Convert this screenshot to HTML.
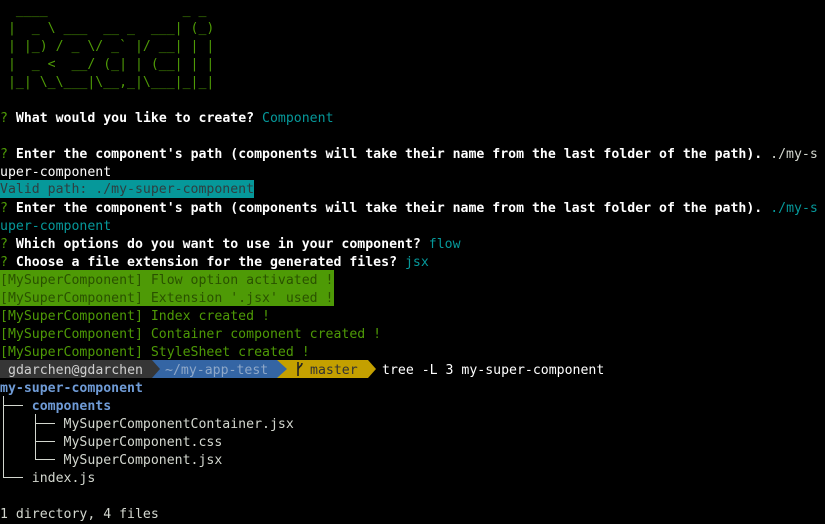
<!DOCTYPE html>
<html><head><meta charset="utf-8"><style>
html,body{margin:0;padding:0;background:#000;width:825px;height:521px;overflow:hidden}
body{font-family:"DejaVu Sans Mono","Liberation Mono",monospace;font-size:13.2px;color:#d3d7cf}
.r{position:absolute;left:0;height:18px;line-height:18px;white-space:pre;margin-top:2px}
.g{color:#4e9a06}.t{color:#06989a}.b{font-weight:bold;color:#fff}
.bl{color:#6f9bd6;font-weight:bold}
</style></head><body>
<div class="r g" style="top:0">  ____                 _ _</div>
<div class="r g" style="top:18px"> |  _ \ ___  __ _  ___| (_)</div>
<div class="r g" style="top:36px"> | |_) / _ \/ _` |/ __| | |</div>
<div class="r g" style="top:54px"> |  _ &lt;  __/ (_| | (__| | |</div>
<div class="r g" style="top:72px"> |_| \_\___|\__,_|\___|_|_|</div>
<div class="r" style="top:108px"><span class="g">?</span> <span class="b">What would you like to create?</span> <span class="t">Component</span></div>
<div class="r" style="top:144px"><span class="g">?</span> <span class="b">Enter the component's path (components will take their name from the last folder of the path).</span> ./my-s</div>
<div class="r" style="top:162px;color:#fff">uper-component</div>
<div class="r" style="top:180px;margin-top:0;line-height:20px"><span style="background:#06989a;color:#2e3e40;display:inline-block;height:18px;line-height:20px">Valid path: ./my-super-component</span></div>
<div class="r" style="top:198px"><span class="g">?</span> <span class="b">Enter the component's path (components will take their name from the last folder of the path).</span> <span class="t">./my-s</span></div>
<div class="r t" style="top:216px">uper-component</div>
<div class="r" style="top:234px"><span class="g">?</span> <span class="b">Which options do you want to use in your component?</span> <span class="t">flow</span></div>
<div class="r" style="top:252px"><span class="g">?</span> <span class="b">Choose a file extension for the generated files?</span> <span class="t">jsx</span></div>
<div style="position:absolute;top:270px;left:0;width:334px;height:36px;background:#4e9a06"></div>
<div class="r" style="top:270px;color:#2a5200">[MySuperComponent] Flow option activated !</div>
<div class="r" style="top:288px;color:#2a5200">[MySuperComponent] Extension '.jsx' used !</div>
<div class="r g" style="top:306px">[MySuperComponent] Index created !</div>
<div class="r g" style="top:324px">[MySuperComponent] Container component created !</div>
<div class="r g" style="top:342px">[MySuperComponent] StyleSheet created !</div>
<div style="position:absolute;top:360px;left:0;width:152px;height:18px;background:#363636"></div>
<div style="position:absolute;top:360px;left:152px;width:125px;height:18px;background:#3465a4"></div>
<div style="position:absolute;top:360px;left:277px;width:91px;height:18px;background:#c4a000"></div>
<svg style="position:absolute;top:360px;left:152px" width="230" height="18">
<polygon points="0,0 8,9 0,18" fill="#363636"/>
<polygon points="125,0 135,9 125,18" fill="#3465a4"/>
<polygon points="216,0 224,9 216,18" fill="#c4a000"/>
<path d="M146 2 V16 M146 10 C146 6 150 7 150 3" stroke="#222" stroke-width="1.6" fill="none"/>
</svg>
<div class="r" style="top:360px;left:8px;color:#d0d0d0">gdarchen@gdarchen</div>
<div class="r" style="top:360px;left:165px;color:#8fa8c8">~/my-app-test</div>
<div class="r" style="top:360px;left:310px;color:#333">master</div>
<div class="r" style="top:360px;left:382px;color:#fff">tree -L 3 my-super-component</div>
<div class="r bl" style="top:378px">my-super-component</div>
<svg style="position:absolute;top:396px;left:0" width="60" height="90">
<path d="M3.5 0 V81.5 H23 M3.5 9.5 H23 M35.5 18 V63.5 H55 M35.5 27.5 H55 M35.5 45.5 H55" stroke="#d3d7cf" stroke-width="1" fill="none"/>
</svg>
<div class="r" style="top:396px">    <span class="bl">components</span></div>
<div class="r" style="top:414px">        MySuperComponentContainer.jsx</div>
<div class="r" style="top:432px">        MySuperComponent.css</div>
<div class="r" style="top:450px">        MySuperComponent.jsx</div>
<div class="r" style="top:468px">    index.js</div>
<div class="r" style="top:504px">1 directory, 4 files</div>
</body></html>
